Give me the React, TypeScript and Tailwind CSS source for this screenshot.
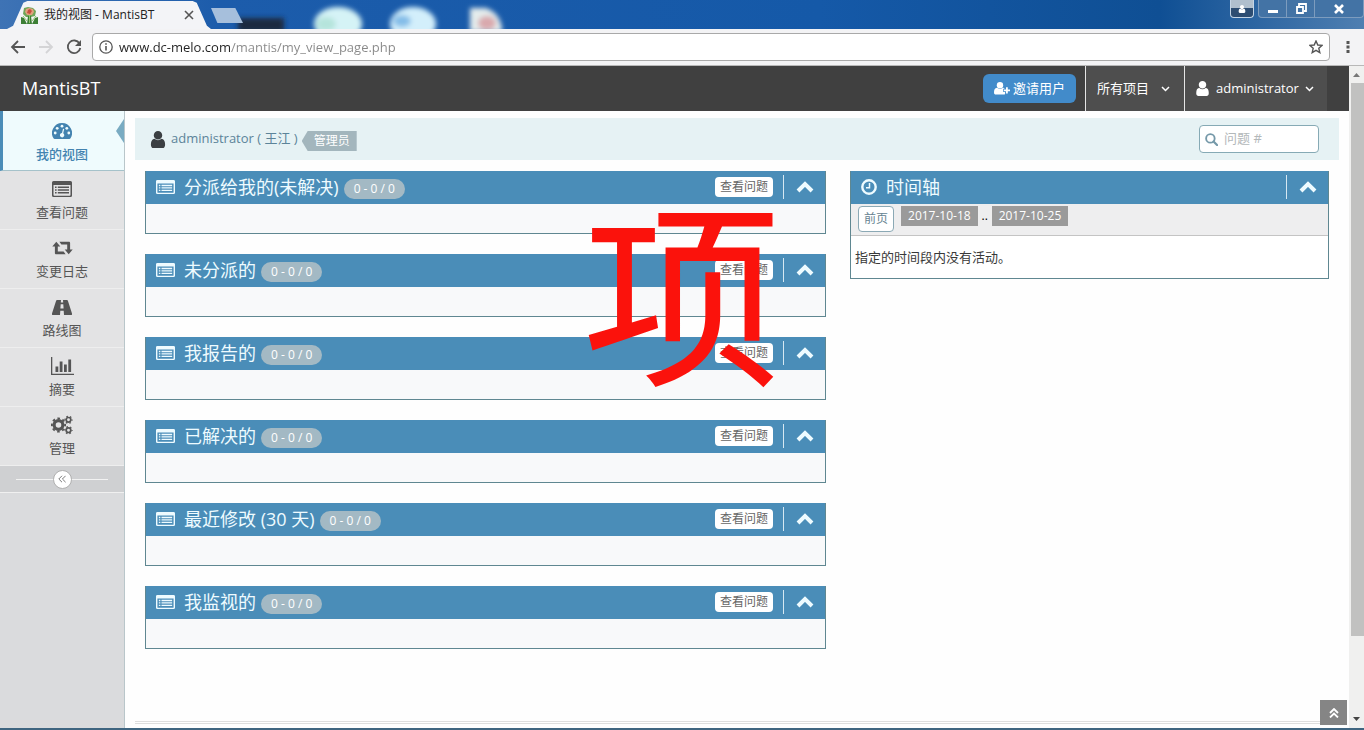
import React from 'react';

type IconProps = { className?: string };

function ListIcon({ className }: IconProps) {
  return (
    <svg viewBox="0 0 20 16" preserveAspectRatio="none" className={className} aria-hidden="true">
      <path
        fill="currentColor"
        fillRule="evenodd"
        d="M1.500 0h17a1.500 1.500 0 0 1 1.500 1.500v13a1.500 1.500 0 0 1-1.500 1.500h-17A1.500 1.500 0 0 1 0 14.500v-13A1.500 1.500 0 0 1 1.500 0zM1.500 4v10c0 .4.300.700.700.700h15.600c.4 0 .7-.3.7-.7V4z"
      />
      <path fill="currentColor" d="M3 5.400h1.600V7H3zM3 8.200h1.600v1.600H3zM3 11h1.600v1.600H3zM5.800 5.400H17V7H5.800zM5.800 8.200H17v1.600H5.800zM5.800 11H17v1.600H5.800z" />
    </svg>
  );
}

const userPath =
  'M1536 1399q0 109-62.5 187t-150.5 78h-854q-88 0-150.5-78t-62.5-187q0-85 8.5-160.5t31.5-152 58.5-131 94-89 134.5-34.5q131 128 313 128t313-128q76 0 134.5 34.5t94 89 58.5 131 31.5 152 8.5 160.5zm-256-887q0 159-112.5 271.5t-271.5 112.5-271.5-112.5-112.5-271.5 112.5-271.5 271.500-112.500 271.500 112.500 112.500 271.500z';

function UserIcon({ className }: IconProps) {
  return (
    <svg viewBox="256 128 1280 1536" className={className} aria-hidden="true">
      <path fill="currentColor" d={userPath} />
    </svg>
  );
}

function UserPlusIcon({ className }: IconProps) {
  return (
    <svg viewBox="0 0 16 13" className={className} aria-hidden="true">
      <circle cx="6" cy="3.200" r="3.200" fill="currentColor" />
      <path fill="currentColor" d="M3 5.800c1.800 1.500 4.200 1.500 6 0 .8.100 1.300.4 1.700.9H9.200v3.200h1.900V12c-.3.400-.8.600-1.400.6H1.800C.7 12.600 0 11.800 0 10.700c0-2.600.7-4.700 3-4.900z" />
      <path fill="currentColor" d="M12 5.300h1.800v2.100H16v1.800h-2.200v2.200H12V9.200H9.900V7.400H12z" />
    </svg>
  );
}

function GaugeIcon({ className }: IconProps) {
  return (
    <svg viewBox="0 0 20 16" className={className} aria-hidden="true">
      <path fill="currentColor" d="M10 0a10 10 0 0 1 8.500 15.300c-.3.500-.7.700-1.100.7H2.600c-.4 0-.8-.2-1.100-.7A10 10 0 0 1 10 0z" />
      <g fill="#effbfd">
        <circle cx="3.200" cy="10" r="1.400" />
        <circle cx="5.200" cy="5.300" r="1.400" />
        <circle cx="10" cy="3.200" r="1.400" />
        <circle cx="14.800" cy="5.300" r="1.400" />
        <circle cx="16.800" cy="10" r="1.400" />
        <path d="M11 5.800l1.200.3-1 4.200a2.200 2.200 0 1 1-1.200-.3z" />
      </g>
    </svg>
  );
}

function RetweetIcon({ className }: IconProps) {
  return (
    <svg viewBox="0 0 21 14" className={className} aria-hidden="true">
      <path fill="currentColor" d="M4.300.8L8.300 5.600H5.800v5h5.800l2 2.600H4.200c-.8 0-1.300-.5-1.300-1.300V5.600H.3zM7.400.8h9.400c.8 0 1.300.5 1.300 1.300v6.300h2.600l-4 4.800-4-4.800h2.500v-5H9.400z" />
    </svg>
  );
}

function RoadIcon({ className }: IconProps) {
  return (
    <svg viewBox="0 0 20 15" className={className} aria-hidden="true">
      <path
        fill="currentColor"
        fillRule="evenodd"
        d="M5 0h4l-.2 2.600h2.400L11 0h4c.4 0 .7.200.9.700L20 13.500c.2.900-.1 1.500-.8 1.500H12l-.3-4.200H8.300L8 15H.8c-.7 0-1-.6-.8-1.500L4.100.7C4.300.2 4.600 0 5 0zM8.700 4.200L8.400 8.500h3.200l-.3-4.300z"
      />
    </svg>
  );
}

function ChartIcon({ className }: IconProps) {
  return (
    <svg viewBox="0 0 23 18" className={className} aria-hidden="true">
      <path fill="currentColor" d="M0 0h1.300v16.700H23V18H0zM4.500 9.500h2.800V15H4.500zM8.700 4.500h2.800V15H8.700zM13 7.500h2.800V15H13zM17.300 2.500h2.800V15h-2.800z" />
    </svg>
  );
}

function CogsIcon({ className }: IconProps) {
  return (
    <svg viewBox="0 0 22 20" className={className} fill="none" stroke="currentColor" aria-hidden="true">
      <circle cx="7.500" cy="10" r="4.400" strokeWidth="3.200" />
      <circle cx="7.500" cy="10" r="6.600" strokeWidth="1.900" strokeDasharray="2.600 2.584" strokeDashoffset="1.300" />
      <circle cx="17.500" cy="4.800" r="2.300" strokeWidth="1.700" />
      <circle cx="17.500" cy="4.800" r="3.500" strokeWidth="1.300" strokeDasharray="1.600 2.065" strokeDashoffset=".8" />
      <circle cx="17.500" cy="15.200" r="2.300" strokeWidth="1.700" />
      <circle cx="17.500" cy="15.200" r="3.500" strokeWidth="1.300" strokeDasharray="1.600 2.065" strokeDashoffset=".8" />
    </svg>
  );
}

function ChevronIcon({ className, up }: IconProps & { up?: boolean }) {
  return (
    <svg viewBox="0 0 18 12" className={className} aria-hidden="true">
      <path
        fill="none"
        stroke="currentColor"
        strokeWidth={up ? 4 : 3}
        d={up ? 'M2 10l7-7 7 7' : 'M2 2l7 7 7-7'}
      />
    </svg>
  );
}

function SearchIcon({ className }: IconProps) {
  return (
    <svg viewBox="0 0 14 14" className={className} aria-hidden="true">
      <circle cx="5.800" cy="5.800" r="4.600" fill="none" stroke="currentColor" strokeWidth="2" />
      <path d="M9.200 9.200L13 13" stroke="currentColor" strokeWidth="2.400" strokeLinecap="round" />
    </svg>
  );
}

function ClockIcon({ className }: IconProps) {
  return (
    <svg viewBox="0 0 16 16" className={className} aria-hidden="true">
      <circle cx="8" cy="8" r="6.700" fill="none" stroke="currentColor" strokeWidth="2.400" />
      <path d="M8.500 4v4.700H5" fill="none" stroke="currentColor" strokeWidth="1.500" />
    </svg>
  );
}

function DoubleAngle({ className, up }: IconProps & { up?: boolean }) {
  return (
    <svg viewBox="0 0 10 10" className={className} aria-hidden="true">
      <path
        fill="none"
        stroke="currentColor"
        strokeWidth={up ? 1.8 : 1.2}
        d={up ? 'M1 5l4-4 4 4M1 9.500l4-4 4 4' : 'M5 1L1 5l4 4M9.500 1l-4 4 4 4'}
      />
    </svg>
  );
}

function MantisLogo() {
  return (
    <svg viewBox="0 0 17 17" className="size-[17px] shrink-0" aria-hidden="true">
      <path d="M3 1l4-1 5 1 3 3-1 5-4 1H5L2 7z" fill="#6fa657" />
      <path d="M5 2l3-1 4 1 1 3-2 3H6L4 5z" fill="#e2a07c" />
      <path d="M7 3l2-1 2 2-2 3-3-1z" fill="#c74f3e" />
      <path d="M0 10l3 1 3 6H0zM17 10l-3 1-3 6h6zM7 9h3l1 8H6z" fill="#3c7f35" />
      <path d="M2 9l4 5M15 9l-4 5M8.500 8v8" stroke="#8fc46c" strokeWidth="1" />
    </svg>
  );
}

function TitleBar() {
  return (
    <header className="relative flex h-[29px] items-start overflow-hidden bg-[linear-gradient(90deg,#3e73b5_0,#1c5cab_16%,#1559a8_60%,#0f4f94_85%,#4f7fb1_100%)]">
      <svg className="absolute left-0 top-0 h-[29px] w-[560px]" viewBox="0 0 560 29" aria-hidden="true">
        <defs>
          <filter id="soft" x="-30%" y="-50%" width="160%" height="200%">
            <feGaussianBlur stdDeviation="2.500" />
          </filter>
        </defs>
        <g filter="url(#soft)">
          <rect x="238" y="18" width="46" height="14" fill="#1b2a40" />
          <ellipse cx="338" cy="24" rx="24" ry="17" fill="#d5f3f6" />
          <ellipse cx="326" cy="24" rx="10" ry="7" fill="#b5e4dc" />
          <ellipse cx="413" cy="24" rx="23" ry="17" fill="#d3effb" />
          <ellipse cx="402" cy="21" rx="9" ry="6" fill="#84bde8" />
          <path d="M470 8h16q16 6 16 24h-32z" fill="#e4ecec" />
          <ellipse cx="487" cy="23" rx="9" ry="7" fill="#d9a9ad" />
        </g>
      </svg>
      <div className="relative ml-[7px] mt-px flex h-7 w-[204px] items-center bg-[#f3f4f7] pl-[14px] text-xs text-[#222] [clip-path:polygon(0_100%,3%_88%,8%_6%,10%_0,91%_0,93%_6%,98%_88%,100%_100%)]">
        <MantisLogo />
        <span className="ml-1.5 whitespace-nowrap">我的视图 - MantisBT</span>
        <button aria-label="关闭标签页" className="ml-auto mr-[17px]">
          <svg viewBox="0 0 10 10" className="size-[10px]" aria-hidden="true">
            <path d="M1 1l8 8M9 1L1 9" stroke="#555" strokeWidth="1.600" />
          </svg>
        </button>
      </div>
      <button aria-label="新标签页" className="relative mt-2 h-[15px] w-8 bg-[#a6bfdc] [clip-path:polygon(0_0,76%_0,100%_100%,20%_100%)]" />
      <div className="relative ml-auto flex text-white">
        <button aria-label="用户" className="mr-1 flex h-[18px] w-6 items-center justify-center rounded-b border border-t-0 border-[#c5d5e5] bg-[linear-gradient(#b0bfcd_50%,#2d4d72_50%)]">
          <UserIcon className="h-2 w-2.5" />
        </button>
        <div className="flex h-[18px] rounded-b border border-t-0 border-[#7d9cbe] bg-[#4373a5]">
          <button aria-label="最小化" className="flex w-7 items-center justify-center border-r border-[#7d9cbe]">
            <svg viewBox="0 0 12 12" className="size-3" aria-hidden="true"><path d="M1 7h10v3H1z" fill="white" /></svg>
          </button>
          <button aria-label="还原" className="flex w-7 items-center justify-center border-r border-[#7d9cbe]">
            <svg viewBox="0 0 12 12" className="size-3" aria-hidden="true">
              <path d="M4 3V1h7v7H9M2 4h6v6H2z" fill="none" stroke="white" strokeWidth="1.800" />
            </svg>
          </button>
          <button aria-label="关闭" className="flex w-12 items-center justify-center">
            <svg viewBox="0 0 12 12" className="size-3" aria-hidden="true"><path d="M2 2l8 8M10 2l-8 8" stroke="white" strokeWidth="2.600" /></svg>
          </button>
        </div>
      </div>
    </header>
  );
}

function Toolbar() {
  return (
    <div className="flex h-[37px] items-center border-b border-[#b8b8b8] bg-[#f3f3f5] text-[#555]">
      <button aria-label="后退" className="ml-2.5">
        <svg viewBox="0 0 16 16" className="size-4" aria-hidden="true"><path d="M15 8H2M8 2L2 8l6 6" fill="none" stroke="currentColor" strokeWidth="1.800" /></svg>
      </button>
      <button aria-label="前进" className="ml-3 text-[#d4d4d6]">
        <svg viewBox="0 0 16 16" className="size-4" aria-hidden="true"><path d="M1 8h13M8 2l6 6-6 6" fill="none" stroke="currentColor" strokeWidth="1.800" /></svg>
      </button>
      <button aria-label="重新加载" className="ml-3">
        <svg viewBox="0 0 16 16" className="size-4" aria-hidden="true">
          <path d="M13.500 4.500A6.300 6.300 0 1 0 14.300 9" fill="none" stroke="currentColor" strokeWidth="1.800" />
          <path d="M15 1v6H9z" fill="currentColor" />
        </svg>
      </button>
      <div className="ml-2.5 flex h-7 flex-1 items-center rounded-sm border border-[#a9a9a9] bg-white px-1.5">
        <svg viewBox="0 0 14 14" className="size-3.5 shrink-0" aria-hidden="true">
          <circle cx="7" cy="7" r="6.200" fill="none" stroke="currentColor" strokeWidth="1.300" />
          <path d="M7 6v4.500M7 3.200v1.600" stroke="currentColor" strokeWidth="1.600" />
        </svg>
        <input
          aria-label="地址"
          defaultValue="www.dc-melo.com/mantis/my_view_page.php"
          className="ml-1.5 min-w-0 flex-1 bg-[linear-gradient(90deg,#222_112px,#888_112px)] bg-clip-text pt-px text-[13px] text-[#222] outline-none [-webkit-text-fill-color:transparent]"
        />
        <button aria-label="收藏">
          <svg viewBox="0 0 14 14" className="size-3.5" aria-hidden="true">
            <path d="M7 1l1.800 4 4.200.4-3.200 2.900 1 4.300L7 10.300l-3.800 2.300 1-4.300L1 5.400 5.200 5z" fill="none" stroke="currentColor" strokeWidth="1.400" />
          </svg>
        </button>
      </div>
      <button aria-label="菜单" className="ml-4 mr-3.5">
        <svg viewBox="0 0 4 14" className="h-3.5 w-1" aria-hidden="true">
          <path d="M.5 1h3v3h-3zM.5 5.500h3v3h-3zM.5 10h3v3h-3z" fill="currentColor" />
        </svg>
      </button>
    </div>
  );
}

function NavBar() {
  return (
    <nav className="flex h-[45px] items-stretch bg-[#404040] text-[13px] text-white">
      <a href="#home" className="flex items-center pb-0.5 pl-[22px] text-lg">MantisBT</a>
      <div className="ml-auto flex items-center pr-[9px]">
        <a href="#invite" className="flex h-[29px] items-center gap-[3px] rounded-md bg-[#428bca] px-[11px]">
          <UserPlusIcon className="h-[13px] w-4" />
          邀请用户
        </a>
      </div>
      <button className="flex w-[99px] items-center border-l border-[#e5e5e5] bg-[#4e4e4e] pl-[11px]">
        所有项目
        <ChevronIcon className="ml-3 h-1.5 w-[9px]" />
      </button>
      <button className="flex w-[143px] items-center border-l border-[#e5e5e5] bg-[#4e4e4e] pl-[11px]">
        <UserIcon className="mr-[7px] h-[15px] w-[13px]" />
        administrator
        <ChevronIcon className="ml-1.5 h-1.5 w-[9px]" />
      </button>
      <div className="w-[22px]" />
    </nav>
  );
}

const menu = [
  { label: '我的视图', icon: <GaugeIcon className="h-4 w-5" /> },
  { label: '查看问题', icon: <ListIcon className="h-4 w-5" /> },
  { label: '变更日志', icon: <RetweetIcon className="h-3.5 w-[21px]" /> },
  { label: '路线图', icon: <RoadIcon className="h-[15px] w-5" /> },
  { label: '摘要', icon: <ChartIcon className="h-[18px] w-[23px]" /> },
  { label: '管理', icon: <CogsIcon className="h-5 w-[22px]" /> },
];

function Sidebar() {
  return (
    <aside className="flex w-[125px] shrink-0 flex-col border-r border-[#b9c6ca] bg-[#dadbdd]">
      <ul>
        {menu.map((item, i) => (
          <li key={item.label} className="relative">
            <a
              href={`#menu-${i}`}
              className={
                i === 0
                  ? 'flex h-[60px] flex-col items-center border-b border-l-[3px] border-b-[#a5c2ca] border-l-[#4b8db8] bg-[#effbfd] pr-[3px] pt-[9px] text-[13px] font-medium text-[#4383b0]'
                  : 'flex h-[59px] flex-col items-center border-b border-[#eeeeee] bg-[#e3e3e4] pt-[7px] text-[13px] text-[#555]'
              }
            >
              <span className="flex h-[22px] items-center">{item.icon}</span>
              <span className="mt-0.5 leading-5">{item.label}</span>
            </a>
            {i === 0 && (
              <svg viewBox="0 0 8 24" className="absolute right-0 top-2 h-6 w-2 text-[#79abc2]" aria-hidden="true">
                <path d="M8 0v24L0 12z" fill="currentColor" />
              </svg>
            )}
          </li>
        ))}
      </ul>
      <div className="flex h-[27px] items-center border-b border-[#f0f0f0] bg-[#cfd0d2] px-4">
        <span className="h-px flex-1 bg-[#f2f2f2]" />
        <button aria-label="收起菜单" className="flex size-[19px] items-center justify-center rounded-full border border-[#b0b0b0] bg-white text-[#777]">
          <DoubleAngle className="size-2" />
        </button>
        <span className="h-px flex-1 bg-[#f2f2f2]" />
      </div>
    </aside>
  );
}

function PanelHead({ icon, title, children }: { icon: React.ReactNode; title: string; children?: React.ReactNode }) {
  return (
    <div className="flex h-[33px] items-center bg-[#4a8db8] pb-0.5 pl-2.5 pr-[11px] text-[#eefbff]">
      {icon}
      <h2 className="ml-[9px] text-lg leading-6">{title}</h2>
      {children}
      <span className="h-6 w-px bg-[#d6e8f2]" />
      <button aria-label={`折叠 ${title}`} className="ml-3">
        <ChevronIcon up className="h-3 w-[18px]" />
      </button>
    </div>
  );
}

const boxes = ['分派给我的(未解决)', '未分派的', '我报告的', '已解决的', '最近修改 (30 天)', '我监视的'];

function IssueBox({ title }: { title: string }) {
  return (
    <section className="border border-t-0 border-[#5f8791] bg-[#f8f9fa]">
      <PanelHead icon={<ListIcon className="h-[14px] w-[19px] shrink-0" />} title={title}>
        <span className="ml-[5px] mt-1 rounded-full bg-[#a3b9c4] px-2.5 text-xs leading-5 text-white">0 - 0 / 0</span>
        <a href="#issues" className="ml-auto mr-2.5 rounded-sm bg-white px-[5px] text-xs leading-5 text-[#666]">查看问题</a>
      </PanelHead>
      <div className="h-[29px]" />
    </section>
  );
}

function Timeline() {
  return (
    <section className="border border-t-0 border-[#5f8791] bg-white text-[13px]">
      <PanelHead icon={<ClockIcon className="size-4" />} title="时间轴">
        <span className="ml-auto" />
      </PanelHead>
      <div className="flex h-8 items-start border-b border-[#c4c4c4] bg-[#eeeeef] pl-[7px] pt-0.5 text-xs">
        <button className="h-[26px] rounded border border-[#8ba9b5] bg-white px-[5px] text-[#668391]">前页</button>
        <span className="ml-[7px] bg-[#9a9a9a] px-[7px] leading-5 text-white">2017-10-18</span>
        <span className="w-3.5 text-center leading-5">..</span>
        <span className="bg-[#9a9a9a] px-[7px] leading-5 text-white">2017-10-25</span>
      </div>
      <p className="px-1 pb-[11px] pt-[11px] leading-5 text-[#393939]">指定的时间段内没有活动。</p>
    </section>
  );
}

function ScrollBar() {
  return (
    <div className="flex w-[15px] shrink-0 flex-col items-center bg-[#f0f0ef]" aria-hidden="true">
      <svg viewBox="0 0 15 17" className="h-[17px] w-[15px]"><path d="M4 11h7L7.500 7z" fill="#777" /></svg>
      <div className="ml-px w-[13px] grow-[553] bg-[#c1c1c0]" />
      <div className="grow-[75]" />
      <svg viewBox="0 0 15 17" className="h-[17px] w-[15px]"><path d="M4 6h7l-3.500 4z" fill="#444" /></svg>
    </div>
  );
}

function Main() {
  return (
    <main className="relative flex min-w-0 flex-1 flex-col bg-[#fefefe] pt-[7px]">
      <div className="mx-2.5 flex h-[42px] items-center bg-[#e6f2f4] pl-[15px] pr-5 text-[13px] text-[#5c8499]">
        <UserIcon className="mr-[5px] h-[17px] w-4 text-[#3b3f42]" />
        <a href="#account">administrator ( 王江 )</a>
        <span className="ml-1 mt-1 bg-[#a3b6bd] pl-3 pr-[7px] text-xs leading-5 text-white [clip-path:polygon(0_50%,6px_0,100%_0,100%_100%,6px_100%)]">管理员</span>
        <label className="ml-auto flex h-7 w-[120px] items-center rounded border border-[#86aab5] bg-white px-[5px]">
          <SearchIcon className="size-[13px] shrink-0 text-[#7599a9]" />
          <input aria-label="问题 #" placeholder="问题 #" className="ml-1.5 w-full min-w-0 outline-none placeholder:text-[#b3b8ba]" />
        </label>
      </div>
      <div className="grid grid-cols-[681fr_479fr] items-start gap-6 px-5 pt-[11px]">
        <div className="flex flex-col gap-5">
          {boxes.map((title) => (
            <IssueBox key={title} title={title} />
          ))}
        </div>
        <Timeline />
      </div>
      <div className="mx-2.5 mt-auto h-[7px] border-t-[3px] border-double border-[#dedede]" />
      <button aria-label="回到顶部" className="absolute bottom-[3px] right-0.5 flex h-[25px] w-[27px] items-center justify-center bg-[#858585] text-white">
        <DoubleAngle up className="size-2.5" />
      </button>
      <span className="pointer-events-none absolute left-[458px] top-[84px] text-[198px] leading-[198px] text-[#fb120c]">项</span>
    </main>
  );
}

export default function App() {
  return (
    <div className="flex min-h-screen flex-col border-b-2 border-[#3f6580] bg-white font-['Open_Sans','Noto_Sans_CJK_SC',sans-serif]" lang="zh-CN">
      <TitleBar />
      <Toolbar />
      <div className="flex flex-1">
        <div className="flex min-w-0 flex-1 flex-col">
          <NavBar />
          <div className="flex flex-1">
            <Sidebar />
            <Main />
          </div>
        </div>
        <ScrollBar />
      </div>
    </div>
  );
}
